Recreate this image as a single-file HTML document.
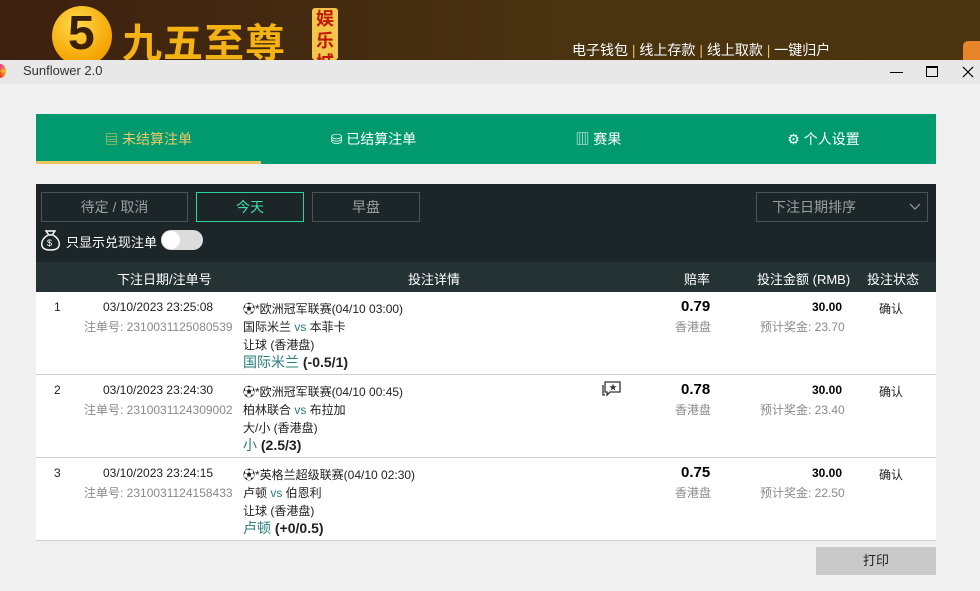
<!DOCTYPE html>
<html><head><meta charset="utf-8"><style>
*{margin:0;padding:0;box-sizing:border-box}
body{width:980px;height:591px;overflow:hidden;background:#f0f0f0;font-family:"Liberation Sans","Noto Sans CJK SC",sans-serif;font-size:12px;color:#222;position:relative}
.a{position:absolute;white-space:nowrap}
.banner{left:0;top:0;width:980px;height:60px;background:linear-gradient(90deg,#3d200f,#4a3410 60%,#4a3510)}
.title{left:0;top:60px;width:980px;height:24px;background:#e8e8e8}
.tabs{left:36px;top:114px;width:900px;height:50px;background:#009a6e}
.tab{position:absolute;top:0;height:50px;width:225px;line-height:50px;text-align:center;color:#fff;font-size:14px}
.dark{left:36px;top:184px;width:900px;height:78px;background:#1c2527}
.hdr{left:36px;top:262px;width:900px;height:30px;background:#243234;color:#fff}
.btn{position:absolute;top:192px;height:30px;border:1px solid #4a5355;color:#9aa0a0;text-align:center;line-height:28px;font-size:14px}
.row{position:absolute;left:36px;width:900px;height:83px;background:#fff;border-bottom:1px solid #cfcfcf}
.g{color:#8a8a8a}
.t{color:#2a7d79}
.b{font-weight:bold;color:#000}
.h{color:#fff;font-size:13px}
</style></head><body>
<div class="a banner"></div>
<div class="a" style="left:52px;top:6px;width:60px;height:60px;border-radius:50%;background:radial-gradient(circle at 40% 30%,#ffd84a,#f4a400 70%,#d98400)"></div>
<div class="a" style="left:68px;top:6px;font-size:48px;font-weight:bold;color:#3a1f0a;font-family:'Liberation Sans',sans-serif">5</div>
<div class="a" style="left:122px;top:11px;font-size:40px;font-weight:bold;color:#f4b214;font-family:'Noto Sans CJK SC',sans-serif;letter-spacing:1px">九五至尊</div>
<div class="a" style="left:312px;top:8px;width:26px;height:52px;background:#f3c64a;border-radius:3px;color:#c0180c;font-size:18px;line-height:22px;text-align:center;white-space:normal;overflow:hidden;font-weight:bold">娱乐城</div>
<div class="a" style="left:572px;top:40px;color:#fff;font-size:14px">电子钱包 <span style="color:#e8c060">|</span> 线上存款 <span style="color:#e8c060">|</span> 线上取款 <span style="color:#e8c060">|</span> 一键归户</div>
<div class="a" style="left:963px;top:41px;width:20px;height:22px;background:#e8842a;border-radius:5px 0 0 0"></div>
<div class="a title"></div>
<div class="a" style="left:-6px;top:64px;width:12px;height:14px;border-radius:50%;background:conic-gradient(#e83a8a,#f4c020,#e8402a,#8a3ad0,#e83a8a)"></div>
<div class="a" style="left:23px;top:63px;color:#333;font-size:13px">Sunflower 2.0</div>
<div class="a" style="left:890px;top:72px;width:13px;height:1px;background:#000"></div>
<div class="a" style="left:926px;top:66px;width:12px;height:11px;border:1px solid #000;border-top-width:2px"></div>
<svg class="a" style="left:962px;top:66px" width="12" height="12" viewBox="0 0 12 12" stroke="#000" stroke-width="1.2"><path d="M1 1L11 11M11 1L1 11"/></svg>

<div class="a tabs">
 <div class="tab" style="left:0;color:#f0c868"><span style="font-size:13px">▤</span> 未结算注单<div style="position:absolute;left:0;bottom:0;width:225px;height:3px;background:#edc55e"></div></div>
 <div class="tab" style="left:225px">⛁ 已结算注单</div>
 <div class="tab" style="left:450px">▥ 赛果</div>
 <div class="tab" style="left:675px">⚙ 个人设置</div>
</div>

<div class="a dark"></div>
<div class="btn" style="left:41px;width:147px">待定 / 取消</div>
<div class="btn" style="left:196px;width:108px;border-color:#2fd49a;color:#3fe0a8">今天</div>
<div class="btn" style="left:312px;width:108px">早盘</div>
<div class="btn" style="left:756px;width:172px;text-align:left;padding-left:15px">下注日期排序<svg style="position:absolute;right:6px;top:10px" width="12" height="8" viewBox="0 0 12 8" fill="none" stroke="#9aa0a0" stroke-width="1.2"><path d="M1 1l5 5 5-5"/></svg></div>
<svg class="a" style="left:40px;top:229px" width="21" height="22" viewBox="0 0 21 22" fill="none" stroke="#fff" stroke-width="1.4"><path d="M6 2h9l-3 4h-3z"/><path d="M8 6C3 9 1 13 2 17c1 3 4 4 8.5 4s7.5-1 8.5-4c1-4-1-8-6-11"/><text x="7" y="17" font-size="9" fill="#fff" stroke="none" font-family="Liberation Sans">$</text></svg>
<div class="a" style="left:66px;top:232px;color:#fff;font-size:13px">只显示兑现注单</div>
<div class="a" style="left:161px;top:230px;width:42px;height:20px;border-radius:10px;background:#dcdcdc"></div>
<div class="a" style="left:162px;top:231px;width:18px;height:18px;border-radius:50%;background:#fff"></div>

<div class="a hdr"></div>
<div class="a h" style="left:117px;top:269px">下注日期/注单号</div>
<div class="a h" style="left:408px;top:269px">投注详情</div>
<div class="a h" style="left:684px;top:269px">赔率</div>
<div class="a h" style="left:757px;top:269px">投注金额 (RMB)</div>
<div class="a h" style="left:867px;top:269px">投注状态</div>

<div class="row" style="top:292px"></div>
<div class="row" style="top:375px"></div>
<div class="row" style="top:458px"></div>

<div class="a" style="left:54px;top:300px">1</div>
<div class="a" style="left:103px;top:300px">03/10/2023 23:25:08</div>
<div class="a g" style="left:84px;top:318px">注单号: 2310031125080539</div>
<div class="a" style="left:243px;top:300px">⚽*欧洲冠军联赛(04/10 03:00)</div>
<div class="a" style="left:243px;top:318px">国际米兰 <span class="t">vs</span> 本菲卡</div>
<div class="a" style="left:243px;top:336px">让球 (香港盘)</div>
<div class="a" style="left:243px;top:352px;font-size:14px"><span class="t">国际米兰</span> <b>(-0.5/1)</b></div>
<div class="a b" style="left:681px;top:298px;font-size:15px">0.79</div>
<div class="a g" style="left:675px;top:318px">香港盘</div>
<div class="a b" style="left:812px;top:300px">30.00</div>
<div class="a g" style="left:760px;top:318px">预计奖金: 23.70</div>
<div class="a" style="left:879px;top:300px">确认</div>

<div class="a" style="left:54px;top:383px">2</div>
<div class="a" style="left:103px;top:383px">03/10/2023 23:24:30</div>
<div class="a g" style="left:84px;top:401px">注单号: 2310031124309002</div>
<div class="a" style="left:243px;top:383px">⚽*欧洲冠军联赛(04/10 00:45)</div>
<div class="a" style="left:243px;top:401px">柏林联合 <span class="t">vs</span> 布拉加</div>
<div class="a" style="left:243px;top:419px">大/小 (香港盘)</div>
<div class="a" style="left:243px;top:435px;font-size:14px"><span class="t">小</span> <b>(2.5/3)</b></div>
<svg class="a" style="left:600px;top:380px" width="22" height="18" viewBox="0 0 22 18" fill="none" stroke="#333" stroke-width="1.3"><path d="M5 2h15v10H10l-3 3v-3H5z"/><path d="M3 5v10h2"/><text x="9" y="10" font-size="8" fill="#333" stroke="none">★</text></svg>
<div class="a b" style="left:681px;top:381px;font-size:15px">0.78</div>
<div class="a g" style="left:675px;top:401px">香港盘</div>
<div class="a b" style="left:812px;top:383px">30.00</div>
<div class="a g" style="left:760px;top:401px">预计奖金: 23.40</div>
<div class="a" style="left:879px;top:383px">确认</div>

<div class="a" style="left:54px;top:466px">3</div>
<div class="a" style="left:103px;top:466px">03/10/2023 23:24:15</div>
<div class="a g" style="left:84px;top:484px">注单号: 2310031124158433</div>
<div class="a" style="left:243px;top:466px">⚽*英格兰超级联赛(04/10 02:30)</div>
<div class="a" style="left:243px;top:484px">卢顿 <span class="t">vs</span> 伯恩利</div>
<div class="a" style="left:243px;top:502px">让球 (香港盘)</div>
<div class="a" style="left:243px;top:518px;font-size:14px"><span class="t">卢顿</span> <b>(+0/0.5)</b></div>
<div class="a b" style="left:681px;top:464px;font-size:15px">0.75</div>
<div class="a g" style="left:675px;top:484px">香港盘</div>
<div class="a b" style="left:812px;top:466px">30.00</div>
<div class="a g" style="left:760px;top:484px">预计奖金: 22.50</div>
<div class="a" style="left:879px;top:466px">确认</div>

<div class="a" style="left:816px;top:547px;width:120px;height:28px;background:#c9c9c9;text-align:center;line-height:28px;color:#222;font-size:13px">打印</div>
</body></html>
